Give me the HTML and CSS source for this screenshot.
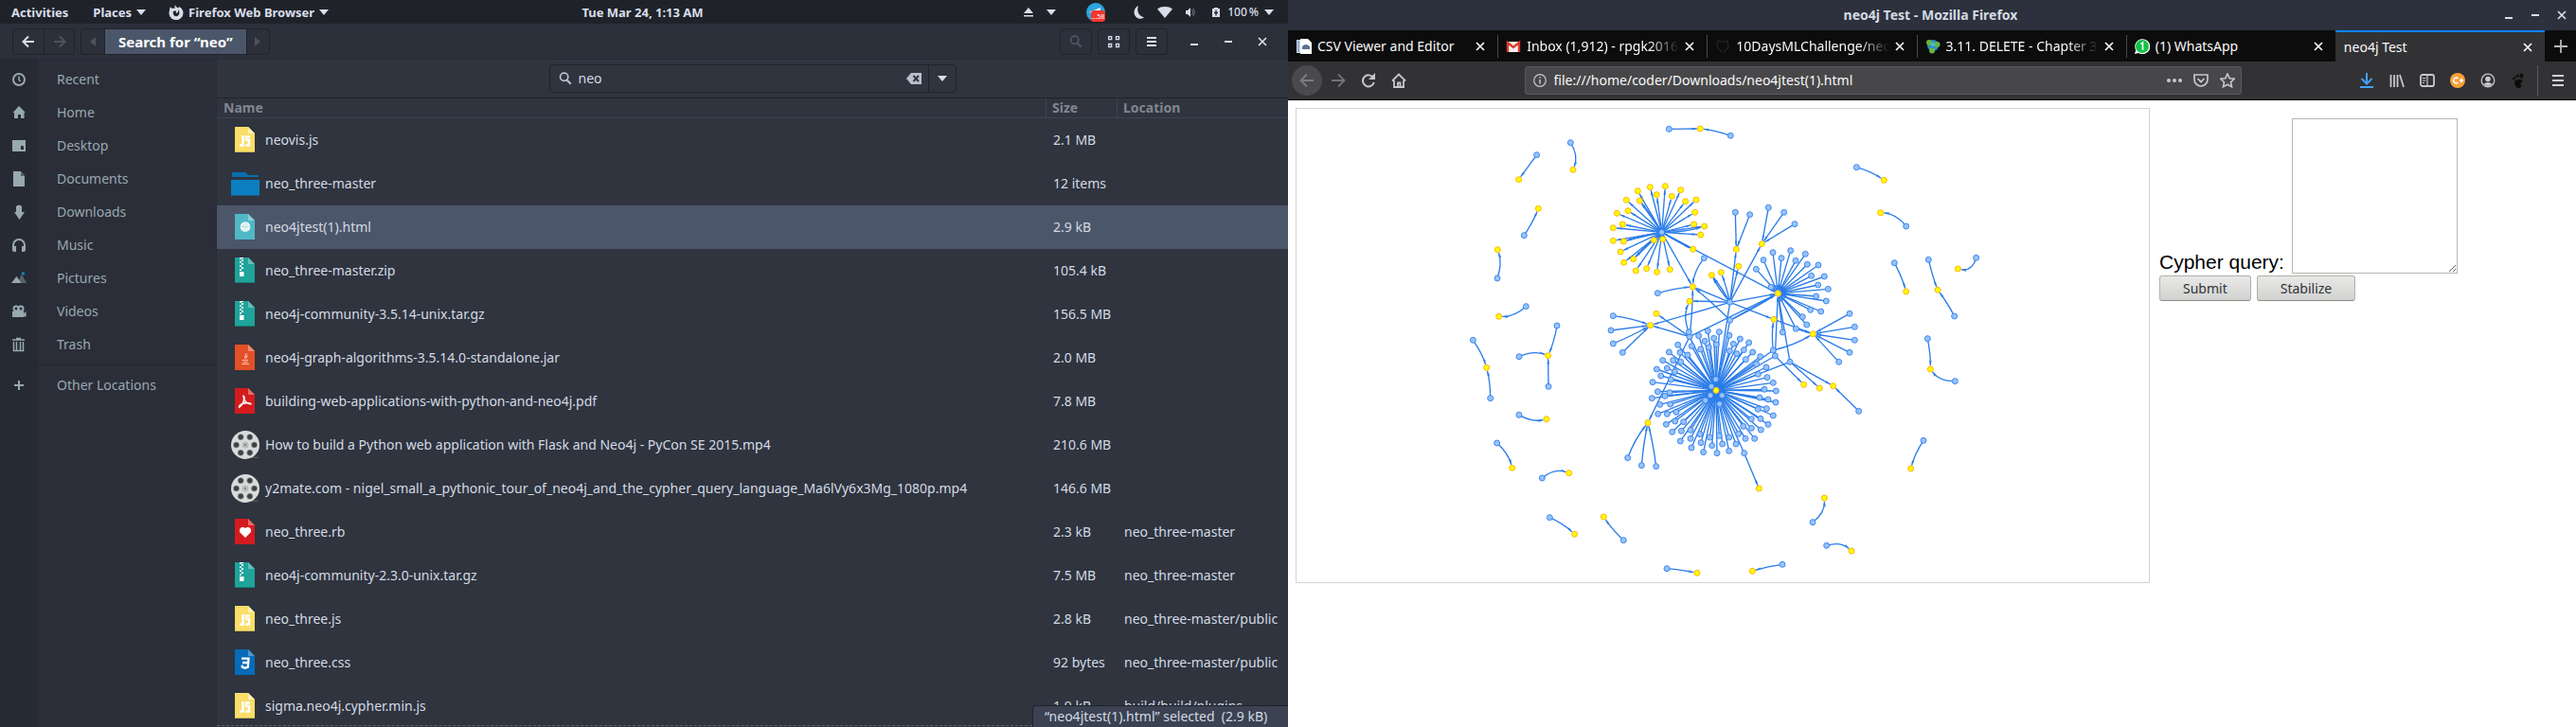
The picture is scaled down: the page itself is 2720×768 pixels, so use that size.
FILE: index.html
```html
<!DOCTYPE html>
<html lang="en">
<head>
<meta charset="utf-8">
<title>neo4j Test</title>
<link rel="stylesheet" href="styles.css">
</head>
<body>
<svg class="sprite" aria-hidden="true">
  <symbol id="caret" viewBox="0 0 10 6"><path d="M0 0h10L5 6z" fill="currentColor"/></symbol>
  <symbol id="close" viewBox="0 0 10 10"><path d="M1 1l8 8M9 1l-8 8" stroke="currentColor" stroke-width="1.7" fill="none"/></symbol>
  <symbol id="search" viewBox="0 0 16 16"><circle cx="6.5" cy="6" r="4.7" fill="none" stroke="currentColor" stroke-width="2"/><path d="M9.5 9.5l5 5" stroke="currentColor" stroke-width="2.4"/></symbol>
  <symbol id="f-js" viewBox="0 0 32 32"><path d="M5 2h14l7 7v20H5z" fill="#f9de68"/><path d="M19 2l7 7h-7z" fill="#fdf0b4"/><path d="M5 28h21v1H5z" fill="#c9b45a"/><path d="M13.5 11v10.500H10M21 12.500h-4V16h3v5.500h-4" fill="none" stroke="#fff" stroke-width="2.500"/></symbol>
  <symbol id="f-dir" viewBox="0 0 32 32"><path d="M2 4h14l3 3h11v2H2z" fill="#0a6fae"/><path d="M1 12h30v16.500H1z" fill="#0c7fc0"/></symbol>
  <symbol id="f-html" viewBox="0 0 32 32"><path d="M5 2h14l7 7v20H5z" fill="#50b8c5"/><path d="M19 2l7 7h-7z" fill="#8fced6"/><circle cx="16" cy="15.500" r="5.300" fill="#fff"/><path d="M14 11.500v8M16 10.500v10M18 11.500v8M11 15.500h10" stroke="#9fd6de" stroke-width=".7"/></symbol>
  <symbol id="f-zip" viewBox="0 0 32 32"><path d="M5 2h14l7 7v20H5z" fill="#1fa39a"/><path d="M19 2l7 7h-7z" fill="#63bfb8"/><path d="M5 28h21v1H5z" fill="#167b74"/><path d="M10 2h2v2h-2zM12 4h2v2h-2zM10 6h2v2h-2zM12 8h2v2h-2zM10 10h2v2h-2zM12 12h2v2h-2zM12 2h2v1h-2zM10 14h2v2h-2zM10 17h4.500v5H10z" fill="#fff"/></symbol>
  <symbol id="f-jar" viewBox="0 0 32 32"><path d="M5 2h14l7 7v20H5z" fill="#e34f26"/><path d="M19 2l7 7h-7z" fill="#ee8d73"/><path d="M17 11c1 2-3 3-1 6M18.500 13.500c-2 1-1 2-1.500 3M12.500 18.500h6.500M13.500 20.500h5M12 22.500h8" fill="none" stroke="#f9c4b4" stroke-width="1.100"/></symbol>
  <symbol id="f-pdf" viewBox="0 0 32 32"><path d="M5 2h14l7 7v20H5z" fill="#d41c1e"/><path d="M19 2l7 7h-7z" fill="#e86a6b"/><path d="M14 9.500c0 5 3 9 8.500 9.500M15 11c0 4-2 9-6 11.500M9.500 21c3-3 8-4 12.500-2.500" fill="none" stroke="#fff" stroke-width="1.700"/></symbol>
  <symbol id="f-rb" viewBox="0 0 32 32"><path d="M5 2h14l7 7v20H5z" fill="#d41c1e"/><path d="M19 2l7 7h-7z" fill="#e86a6b"/><path d="M16 22l-6-6v-3l2-2h2.500L16 12l1.500-1H20l2 2v3z" fill="#fff"/></symbol>
  <symbol id="f-css" viewBox="0 0 32 32"><path d="M5 2h14l7 7v20H5z" fill="#066bb8"/><path d="M19 2l7 7h-7z" fill="#4f98d0"/><path d="M12 11.700h7.500l-.7 9-3 1-3-1-.2-2M13 16h6" fill="none" stroke="#fff" stroke-width="2.300"/></symbol>
  <symbol id="f-reel" viewBox="0 0 32 32"><path d="M22 29l8 .5" stroke="#555" stroke-width="1.500"/><circle cx="16" cy="16" r="15" fill="#dadada"/><circle cx="16" cy="16" r="3.500" fill="#b8bcbc"/><circle cx="16" cy="16" r="1" fill="#777"/><g fill="#3c4145" stroke="#8d9292" stroke-width=".6"><circle cx="11.200" cy="7.700" r="3"/><circle cx="20.800" cy="7.700" r="3"/><circle cx="6.500" cy="16" r="3"/><circle cx="25.500" cy="16" r="3"/><circle cx="11.200" cy="24.300" r="3"/><circle cx="20.800" cy="24.300" r="3"/></g></symbol>
</svg>

<div class="desktop">
  <section class="screen">
    <header class="topbar">
      <nav class="top-left">
        <button>Activities</button>
        <button class="places">Places <svg class="caret"><use href="#caret"/></svg></button>
        <button><svg class="i16" viewBox="0 0 16 16"><path d="M7 0c0 2 2 2.500 3 3.500 1-.3 1-1.500 1-1.500 3 1.500 4.500 4 4.500 6.500A7.500 7.500 0 1 1 1 6l.5-3.500L4 4l3-.5C6 2.500 6.500 1 7 0zM7.500 6L5 7c-1 4 2 6 4 5 3-1 3-5 1-6.500V8L8 9z" fill="currentColor"/></svg> Firefox Web Browser <svg class="caret"><use href="#caret"/></svg></button>
      </nav>
      <button class="clock">Tue Mar 24, 1:13 AM</button>
      <div class="tray">
        <svg class="i10" viewBox="0 0 10 10"><path d="M5 0l5 6H0zM0 8h10v1.500H0z" fill="currentColor"/></svg>
        <svg class="caret"><use href="#caret"/></svg>
        <svg class="i20 telegram" viewBox="0 0 20 20"><circle cx="10" cy="10" r="10" fill="#2ca5e0"/><path d="M3 10l12-5-1 6H8z" fill="#fff"/><rect x="5" y="8" width="15" height="12" rx="3" fill="#f5352f"/><text x="12.500" y="17" text-anchor="middle" class="badge">...58</text></svg>
        <svg class="moon" viewBox="0 0 11 14"><path d="M5 0C-1 3-1 11 5 13.500c2 .7 4 .3 6-1C5 11 3 5 5 0z" fill="currentColor"/></svg>
        <svg class="wifi" viewBox="0 0 16 12"><path d="M0 2.500C4-.8 12-.8 16 2.500L8 12z" fill="currentColor"/></svg>
        <svg class="i10" viewBox="0 0 10 10"><path d="M0 3h2l3-3v10L2 7H0z" fill="currentColor"/><path d="M6.500 2q2 3 0 6M8 1q3 4 0 8" fill="none" stroke="#6b7079"/></svg>
        <svg class="battery" viewBox="0 0 8 10"><path d="M0 1h2V0h4v1h2v9H0z" fill="currentColor"/><path d="M4 2.500v6M2 5.500h4" stroke="#1f2329" stroke-width="1.300"/></svg>
        <span>100&#8201;%</span>
        <svg class="caret"><use href="#caret"/></svg>
      </div>
    </header>

    <div class="headerbar">
      <div class="group">
        <button class="b33" aria-label="Back"><svg class="i14" viewBox="0 0 14 14"><path d="M13 7H2M7 1.500L1.500 7 7 12.500" fill="none" stroke="#d8dee9" stroke-width="2"/></svg></button>
        <button class="b33" aria-label="Forward"><svg class="i14" viewBox="0 0 14 14"><path d="M1 7h11M7 1.500L12.500 7 7 12.500" fill="none" stroke="#4d525d" stroke-width="2"/></svg></button>
      </div>
      <div class="group">
        <button class="b24" aria-label="Previous folder"><svg class="tri" viewBox="0 0 6 10"><path d="M6 0v10L0 5z" fill="#4d525d"/></svg></button>
        <button class="crumb">Search for “neo”</button>
        <button class="b24" aria-label="Next folder"><svg class="tri" viewBox="0 0 6 10"><path d="M0 0v10l6-5z" fill="#4d525d"/></svg></button>
      </div>
      <div class="tools">
        <button class="tool dim" aria-label="Search"><svg class="i14"><use href="#search"/></svg></button>
        <button class="tool" aria-label="Grid view"><svg class="i14" viewBox="0 0 14 14"><path d="M1.700 1.700h3v3h-3zM9.500 1.700h3v3h-3zM1.700 9.500h3v3h-3zM9.500 9.500h3v3h-3z" fill="none" stroke="currentColor" stroke-width="1.300"/></svg></button>
        <button class="tool" aria-label="Menu"><svg class="i14" viewBox="0 0 14 14"><path d="M2 3h10M2 7h10M2 11h10" stroke="currentColor" stroke-width="2"/></svg></button>
      </div>
      <div class="winctl">
        <button aria-label="Minimize"><svg class="i10" viewBox="0 0 10 10"><path d="M1 8h8" stroke="currentColor" stroke-width="2"/></svg></button>
        <button aria-label="Maximize"><svg class="i10" viewBox="0 0 10 10"><path d="M1 5h8" stroke="currentColor" stroke-width="2"/></svg></button>
        <button aria-label="Close"><svg class="i10"><use href="#close"/></svg></button>
      </div>
    </div>

    <div class="files">
      <nav class="places-list">
        <a href="#"><svg viewBox="0 0 16 16"><circle cx="8" cy="8" r="6" fill="none" stroke="currentColor" stroke-width="2"/><path d="M8 4.500V8l1.500 2" fill="none" stroke="currentColor" stroke-width="1.500"/></svg><span>Recent</span></a>
        <a href="#"><svg viewBox="0 0 16 16"><path d="M8 1l7 7h-1.500v6H10v-4H7v4H3V8H1.500z" fill="currentColor"/></svg><span>Home</span></a>
        <a href="#"><svg viewBox="0 0 16 16"><path d="M1 2h14v12H1zM10 8v4h3V9l-1-1z" fill="currentColor" fill-rule="evenodd"/></svg><span>Desktop</span></a>
        <a href="#"><svg viewBox="0 0 16 16"><path d="M2 0h8l4 5v11H2z" fill="currentColor"/><path d="M10 0l4 5h-4z" fill="#59636b"/></svg><span>Documents</span></a>
        <a href="#"><svg viewBox="0 0 16 16"><path d="M5 2q3-3 6 0v6h3l-5.500 8L3 8h2z" fill="currentColor"/></svg><span>Downloads</span></a>
        <a href="#"><svg viewBox="0 0 16 16"><path d="M2 13V8a6 6 0 0 1 12 0v5" fill="none" stroke="currentColor" stroke-width="2"/><path d="M1 9h4v6H3q-2 0-2-2zM11 9h4v4q0 2-2 2h-2z" fill="currentColor"/></svg><span>Music</span></a>
        <a href="#"><svg viewBox="0 0 16 16"><path d="M6 13l5-9 5 9z" fill="#59636b"/><path d="M0 13l5.500-7 5 7z" fill="currentColor"/><circle cx="12.500" cy="3" r="1.700" fill="#1681c4"/></svg><span>Pictures</span></a>
        <a href="#"><svg viewBox="0 0 16 16"><path d="M1 8h12v2l2.500-2v6L13 13v1H1z" fill="currentColor"/><circle cx="5" cy="5" r="2.500" fill="none" stroke="currentColor" stroke-width="2"/><circle cx="10" cy="5" r="2.500" fill="none" stroke="currentColor" stroke-width="2"/></svg><span>Videos</span></a>
        <a href="#"><svg viewBox="0 0 16 16"><path d="M1 3h13M5 1.500h5M2.500 5v9.500h10V5M5.500 5v9M9.500 5v9" fill="none" stroke="currentColor" stroke-width="1.500"/></svg><span>Trash</span></a>
        <a href="#" class="other"><svg viewBox="0 0 16 16"><path d="M8 3v10M3 8h10" stroke="currentColor" stroke-width="2"/></svg><span>Other Locations</span></a>
      </nav>

      <main class="listing">
        <div class="searchrow">
          <div class="entry">
            <svg class="i14"><use href="#search"/></svg>
            <input type="text" value="neo" aria-label="Search files">
            <button class="clear" aria-label="Clear"><svg viewBox="0 0 16 12"><path d="M5 0h11v12H5L0 6z" fill="currentColor"/><path d="M7.500 3l5.500 6M13 3L7.500 9" stroke="#2f343f" stroke-width="2"/></svg></button>
            <button class="drop" aria-label="Filters"><svg class="caret"><use href="#caret"/></svg></button>
          </div>
        </div>
        <div class="scroll">
          <table>
            <thead><tr><th>Name</th><th class="c-size">Size</th><th class="c-loc">Location</th></tr></thead>
            <tbody>
              <tr><td><div class="name"><svg><use href="#f-js"/></svg>neovis.js</div></td><td>2.1 MB</td><td></td></tr>
              <tr><td><div class="name"><svg><use href="#f-dir"/></svg>neo_three-master</div></td><td>12 items</td><td></td></tr>
              <tr class="selected"><td><div class="name"><svg><use href="#f-html"/></svg>neo4jtest(1).html</div></td><td>2.9 kB</td><td></td></tr>
              <tr><td><div class="name"><svg><use href="#f-zip"/></svg>neo_three-master.zip</div></td><td>105.4 kB</td><td></td></tr>
              <tr><td><div class="name"><svg><use href="#f-zip"/></svg>neo4j-community-3.5.14-unix.tar.gz</div></td><td>156.5 MB</td><td></td></tr>
              <tr><td><div class="name"><svg><use href="#f-jar"/></svg>neo4j-graph-algorithms-3.5.14.0-standalone.jar</div></td><td>2.0 MB</td><td></td></tr>
              <tr><td><div class="name"><svg><use href="#f-pdf"/></svg>building-web-applications-with-python-and-neo4j.pdf</div></td><td>7.8 MB</td><td></td></tr>
              <tr><td><div class="name"><svg><use href="#f-reel"/></svg>How to build a Python web application with Flask and Neo4j - PyCon SE 2015.mp4</div></td><td>210.6 MB</td><td></td></tr>
              <tr><td><div class="name"><svg><use href="#f-reel"/></svg>y2mate.com - nigel_small_a_pythonic_tour_of_neo4j_and_the_cypher_query_language_Ma6lVy6x3Mg_1080p.mp4</div></td><td>146.6 MB</td><td></td></tr>
              <tr><td><div class="name"><svg><use href="#f-rb"/></svg>neo_three.rb</div></td><td>2.3 kB</td><td>neo_three-master</td></tr>
              <tr><td><div class="name"><svg><use href="#f-zip"/></svg>neo4j-community-2.3.0-unix.tar.gz</div></td><td>7.5 MB</td><td>neo_three-master</td></tr>
              <tr><td><div class="name"><svg><use href="#f-js"/></svg>neo_three.js</div></td><td>2.8 kB</td><td>neo_three-master/public</td></tr>
              <tr><td><div class="name"><svg><use href="#f-css"/></svg>neo_three.css</div></td><td>92 bytes</td><td>neo_three-master/public</td></tr>
              <tr><td><div class="name"><svg><use href="#f-js"/></svg>sigma.neo4j.cypher.min.js</div></td><td>1.9 kB</td><td>build/build/plugins</td></tr>
            </tbody>
          </table>
          <div class="status">“neo4jtest(1).html” selected&nbsp; (2.9 kB)</div>
        </div>
      </main>
    </div>
  </section>

  <section class="browser">
    <header class="titlebar">
      <h1>neo4j Test - Mozilla Firefox</h1>
      <div class="winctl small">
        <button aria-label="Minimize"><svg class="i10" viewBox="0 0 10 10"><path d="M1 8h8" stroke="currentColor" stroke-width="2"/></svg></button>
        <button aria-label="Maximize"><svg class="i10" viewBox="0 0 10 10"><path d="M1 5h8" stroke="currentColor" stroke-width="2"/></svg></button>
        <button aria-label="Close"><svg class="i10"><use href="#close"/></svg></button>
      </div>
    </header>
    <div class="tabs">
      <div class="tab"><svg class="i16" viewBox="0 0 16 16"><path d="M0 1h7v14H0z" fill="#c9d6ea"/><path d="M4 0h8l4 4v12H4z" fill="#fff"/><path d="M6 8q4-4 8 0v3H6z" fill="#5c7291"/><path d="M2 2v12" stroke="#5c7fb5"/></svg><span class="label">CSV Viewer and Editor</span><button aria-label="Close tab"><svg class="i10"><use href="#close"/></svg></button></div>
      <div class="tab"><svg class="i16" viewBox="0 0 16 16"><path d="M1 3h14v11H1z" fill="#f2f2f2"/><path d="M2 14V4l6 5 6-5v10" fill="none" stroke="#d93a2b" stroke-width="2.400"/></svg><span class="label fade">Inbox (1,912) - rpgk2016@gmail.com</span><button aria-label="Close tab"><svg class="i10"><use href="#close"/></svg></button></div>
      <div class="tab"><svg class="i16" viewBox="0 0 16 16"><path d="M6 15v-3q-4-1-4-5 0-2 1-3V2l2.500 1h5L13 2v2q1 1 1 3 0 4-4 5v3" fill="none" stroke="#1f1f21" stroke-width="1.600"/></svg><span class="label fade">10DaysMLChallenge/neo4j</span><button aria-label="Close tab"><svg class="i10"><use href="#close"/></svg></button></div>
      <div class="tab"><svg class="i16" viewBox="0 0 16 16"><circle cx="8" cy="7" r="6" fill="#2a90c8"/><circle cx="4" cy="4" r="3" fill="#6ab43f"/><circle cx="12.500" cy="6" r="3" fill="#6ab43f"/><circle cx="7" cy="12.500" r="3" fill="#6ab43f"/><circle cx="8" cy="6" r="2" fill="#47c3dc"/></svg><span class="label fade">3.11. DELETE - Chapter 3. Cypher</span><button aria-label="Close tab"><svg class="i10"><use href="#close"/></svg></button></div>
      <div class="tab"><svg class="i16" viewBox="0 0 16 16"><path d="M0 16l1.200-4A8 8 0 1 1 4 15z" fill="#fff"/><circle cx="8" cy="8" r="7" fill="#12c245"/><path d="M6.500 5.500L8.500 4v8" fill="none" stroke="#fff" stroke-width="1.600"/></svg><span class="label">(1) WhatsApp</span><button aria-label="Close tab"><svg class="i10"><use href="#close"/></svg></button></div>
      <div class="tab active"><span class="label">neo4j Test</span><button aria-label="Close tab"><svg class="i10"><use href="#close"/></svg></button></div>
      <button class="newtab" aria-label="New tab"><svg class="i14" viewBox="0 0 14 14"><path d="M7 0v14M0 7h14" stroke="#b8b8bb" stroke-width="1.800"/></svg></button>
    </div>
    <div class="navbar">
      <button class="back" aria-label="Back"><svg class="i16" viewBox="0 0 16 16"><path d="M15 8H2M8 1.500L1.500 8 8 14.500" fill="none" stroke="#7d7d80" stroke-width="1.800"/></svg></button>
      <button aria-label="Forward"><svg class="i16" viewBox="0 0 16 16"><path d="M1 8h13M8 1.500L14.500 8 8 14.500" fill="none" stroke="#737376" stroke-width="1.800"/></svg></button>
      <button aria-label="Reload"><svg class="i16" viewBox="0 0 16 16"><path d="M13 5a6 6 0 1 0 .8 5" fill="none" stroke="currentColor" stroke-width="2"/><path d="M15 0v7H8z" fill="currentColor"/></svg></button>
      <button aria-label="Home"><svg class="i16" viewBox="0 0 16 16"><path d="M1 8.500L8 1.500l7 7M3 8v7h10V8M7 15v-4.500h2.500V15" fill="none" stroke="currentColor" stroke-width="1.800"/></svg></button>
      <div class="urlbar">
        <svg class="i14" viewBox="0 0 14 14"><circle cx="7" cy="7" r="6.300" fill="none" stroke="currentColor" stroke-width="1.200"/><path d="M7 6v4.500M7 3.200v1.500" stroke="currentColor" stroke-width="1.500"/></svg>
        <input type="text" value="file:///home/coder/Downloads/neo4jtest(1).html" aria-label="Address">
        <button aria-label="Page actions"><svg class="i16" viewBox="0 0 16 16"><g fill="currentColor"><circle cx="2" cy="8" r="2"/><circle cx="8" cy="8" r="2"/><circle cx="14" cy="8" r="2"/></g></svg></button>
        <button aria-label="Save to Pocket"><svg class="i16" viewBox="0 0 16 16"><path d="M1 2h14v5a7 7 0 0 1-14 0zM4.500 6L8 9.500 11.500 6" fill="none" stroke="currentColor" stroke-width="1.700"/></svg></button>
        <button aria-label="Bookmark"><svg class="i16" viewBox="0 0 16 16"><path d="M8 1l2.200 4.700 5 .6-3.700 3.400 1 5L8 12.200l-4.500 2.500 1-5L.8 6.300l5-.6z" fill="none" stroke="currentColor" stroke-width="1.600"/></svg></button>
      </div>
      <div class="actions">
        <button aria-label="Downloads"><svg class="i16" viewBox="0 0 16 16"><path d="M8 0v11M2.500 6L8 11.500 13.500 6M1 15h14" fill="none" stroke="#45a1ff" stroke-width="2"/></svg></button>
        <button aria-label="Library"><svg class="i16" viewBox="0 0 16 16"><path d="M1.500 2v13M5 2v13M8.500 2v13M11 2l4 13" stroke="currentColor" stroke-width="1.800"/></svg></button>
        <button aria-label="Sidebar"><svg class="i16" viewBox="0 0 16 16"><rect x="1" y="2" width="14" height="12" rx="2" fill="none" stroke="currentColor" stroke-width="1.800"/><path d="M8 2v12M3 5.500h3.500M3 8h3.500M3 10.500h2" stroke="currentColor" stroke-width="1.200"/></svg></button>
        <button aria-label="Extension"><svg class="i16" viewBox="0 0 16 16"><circle cx="8" cy="8" r="8" fill="#f7a13c"/><path d="M8.500 6a2.800 2.800 0 1 0 0 4M10 8h4M12 6v4" fill="none" stroke="#fff" stroke-width="1.600"/></svg></button>
        <button aria-label="Account"><svg class="i16" viewBox="0 0 16 16"><circle cx="8" cy="8" r="6.800" fill="none" stroke="currentColor" stroke-width="1.300"/><circle cx="8" cy="6.500" r="2.800" fill="currentColor"/><path d="M3.500 11.500q4.500-3 9 0-2 2.500-4.500 2.500t-4.500-2.500z" fill="currentColor"/></svg></button>
        <button aria-label="GNOME integration"><svg class="i16" viewBox="0 0 16 16"><g fill="#0c0c0d"><ellipse cx="11.500" cy="3" rx="2" ry="2.700"/><ellipse cx="7.500" cy="3.200" rx="1.200" ry="1.700"/><ellipse cx="5" cy="4.500" rx="1" ry="1.400"/><ellipse cx="3" cy="6.300" rx="1" ry="1.200"/><path d="M4 9c2-3 9-3 8.500 0-.5 2-3 1.500-2.500 3 2-.5 2 4-1.500 4S4 12 4 9z"/></g></svg></button>
      </div>
      <button class="menu" aria-label="Open menu"><svg class="i14" viewBox="0 0 14 14"><path d="M1 2h12M1 7h12M1 12h12" stroke="#d0d0d3" stroke-width="1.800"/></svg></button>
    </div>
    <div class="page">
      <div class="viz">
        <svg id="graph" viewBox="0 0 2700 1500" role="img" aria-label="Graph of neo4j nodes">
          <defs><marker id="arrow" viewBox="0 0 18 8" refX="17" refY="4" markerWidth="18" markerHeight="8" markerUnits="userSpaceOnUse" orient="auto"><path d="M0 0l18 4-18 4 3-4z" fill="#2b7ce9"/></marker></defs>
        </svg>
      </div>
      <form class="query">
        <div class="field"><label for="cypher">Cypher query:</label><textarea id="cypher"></textarea></div>
        <div class="buttons"><button type="button">Submit</button><button type="button">Stabilize</button></div>
      </form>
    </div>
  </section>
</div>
<script src="graph.js"></script>
</body>
</html>
```
FILE: styles.css
```css
* { box-sizing: border-box; }

body {
  margin: 0;
  background: #2f343f;
  color: #d3dae3;
  font: 14px/20px "Noto Sans", "Open Sans", sans-serif;
}

button {
  margin: 0;
  padding: 0;
  border: 0;
  background: none;
  color: inherit;
  font: inherit;
  display: inline-flex;
  align-items: center;
  justify-content: center;
}

svg { display: block; flex: none; }
.sprite { position: absolute; width: 0; height: 0; }
.i10 { width: 10px; height: 10px; }
.i14 { width: 14px; height: 14px; }
.i16 { width: 16px; height: 16px; }
.i20 { width: 20px; height: 20px; }
.caret { width: 10px; height: 6px; }

.desktop {
  display: grid;
  grid-template-columns: minmax(0, 1fr) minmax(0, 1fr);
  height: 100vh;
  overflow: hidden;
}

.screen, .browser { display: flex; flex-direction: column; min-height: 0; }

/* Top panel */
.topbar {
  display: grid;
  grid-template-columns: 1fr auto 1fr;
  align-items: center;
  flex: none;
  height: 25px;
  padding: 0 15px 0 12px;
  background: #1f2329;
  color: #d8dee9;
  font-size: 13px;
  font-weight: 700;
}
.top-left { display: flex; gap: 24px; }
.top-left button { gap: 5px; white-space: nowrap; }
.places { margin-left: 2px; }
.tray { display: flex; align-items: center; justify-content: flex-end; gap: 14px; }
.telegram { margin: 0 16px 0 18px; }
.badge { font: 7px "Noto Sans", sans-serif; fill: #fff; }
.moon { width: 11px; height: 14px; }
.wifi { width: 16px; height: 12px; }
.battery { width: 8px; height: 10px; margin-left: 4px; }
.tray span { margin: 0 -8px 0 -6px; font-size: 12px; font-weight: 500; }

/* File manager header */
.headerbar {
  display: flex;
  align-items: center;
  flex: none;
  gap: 6px;
  height: 38px;
  padding: 0 15px 0 13px;
  background: #2c303b;
  border-bottom: 1px solid #282b35;
}
.group {
  display: flex;
  height: 28px;
  border: 1px solid #20232b;
  border-radius: 4px;
  overflow: hidden;
}
.group button + button { border-left: 1px solid #20232b; }
.b33 { width: 32px; }
.b24 { width: 24px; }
.tri { width: 6px; height: 10px; }
.crumb { padding: 0 14px; background: #4c566a; color: #fff; font-size: 15px; font-weight: 700; }
.tools { display: flex; gap: 6px; margin-left: auto; }
.tool { width: 34px; height: 28px; border: 1px solid #20232b; border-radius: 4px; color: #d8dee9; }
.dim { color: #4c566a; }
.winctl { display: flex; gap: 12px; margin-left: 10px; color: #d8dee9; }
.winctl button { width: 24px; height: 24px; }

/* File manager body */
.files { display: flex; flex: 1; min-height: 0; }
.places-list {
  display: flex;
  flex-direction: column;
  flex: none;
  width: 229px;
  padding-top: 3px;
  background: linear-gradient(to right, #262a34 40px, #2b2e39 40px);
  border-right: 1px solid #292c36;
}
.places-list a {
  display: flex;
  align-items: center;
  gap: 32px;
  height: 35px;
  padding-left: 12px;
  color: #98a9b0;
  text-decoration: none;
}
.places-list svg { width: 16px; height: 16px; }
.places-list .other { height: 43px; margin-top: 4px; border-top: 1px solid #242731; }

.listing { display: flex; flex-direction: column; flex: 1; min-width: 0; }
.searchrow {
  display: flex;
  justify-content: center;
  flex: none;
  padding: 5px 0;
  border-bottom: 1px solid #20232b;
}
.entry {
  display: flex;
  align-items: center;
  width: 430px;
  height: 30px;
  padding-left: 9px;
  gap: 7px;
  border: 1px solid #20232b;
  border-radius: 4px;
  color: #b8c0cc;
}
.entry input {
  flex: 1;
  min-width: 0;
  padding: 0;
  border: 0;
  background: none;
  color: #d3dae3;
  font: inherit;
}
.clear svg { width: 16px; height: 12px; }
.drop { align-self: stretch; width: 29px; border-left: 1px solid #20232b; color: #d8dee9; }

.scroll { position: relative; flex: 1; min-height: 0; overflow: hidden; }
.scroll::after {
  content: "";
  position: absolute;
  left: 0;
  right: 270px;
  bottom: 1px;
  border-top: 1px dashed #5d626d;
}
table { width: 100%; border-collapse: separate; border-spacing: 0; table-layout: fixed; }
th {
  height: 21px;
  padding: 0 7px;
  border-bottom: 1px solid #3d4452;
  color: #81868f;
  font-weight: 700;
  line-height: 20px;
  text-align: left;
}
th + th { border-left: 1px solid #3d4452; padding-left: 6px; }
.c-size { width: 75px; }
.c-loc { width: 181px; }
td { height: 46px; padding: 0 0 0 8px; white-space: nowrap; }
td:first-child { padding-left: 14px; }
.name { display: flex; align-items: center; gap: 5px; }
.name svg { width: 32px; height: 32px; }
.selected td { background: #4c566a; }
.status {
  position: absolute;
  right: 0;
  bottom: 0;
  width: 270px;
  height: 23px;
  padding-left: 12px;
  border: 1px solid #20232b;
  border-width: 1px 0 0 1px;
  border-radius: 4px 0 0 0;
  background: #3b4252;
  line-height: 22px;
  white-space: nowrap;
}

/* Browser */
.titlebar {
  display: grid;
  grid-template-columns: 1fr auto 1fr;
  align-items: center;
  flex: none;
  height: 32px;
  padding-right: 3px;
  background: #2d313d;
}
.titlebar h1 { grid-column: 2; margin: 0; font-size: 14px; font-weight: 700; }
.small { justify-self: end; gap: 4px; }
.tabs { display: flex; flex: none; height: 33px; background: #0c0c0d; }
.tab {
  position: relative;
  display: flex;
  align-items: center;
  flex: 1;
  min-width: 0;
  gap: 6px;
  padding: 0 13px 0 9px;
  color: #f9f9fa;
}
.tab + .tab::before {
  content: "";
  position: absolute;
  left: 0;
  top: 5px;
  bottom: 4px;
  border-left: 1px solid #4b4b4d;
}
.tab .label { flex: 1; min-width: 0; overflow: hidden; white-space: nowrap; }
.fade { -webkit-mask-image: linear-gradient(to left, transparent, #000 32px); mask-image: linear-gradient(to left, transparent, #000 32px); }
.tab.active { background: #323234; border-top: 2px solid #0a84ff; }
.tab.active::before { display: none; }
.newtab { width: 33px; }
.navbar {
  display: flex;
  align-items: center;
  flex: none;
  gap: 16px;
  height: 41px;
  padding: 0 12px 0 4px;
  border-bottom: 1px solid #0c0c0d;
  background: #323234;
  color: #c8c8cb;
}
.navbar .back { width: 32px; height: 32px; margin-right: -7px; border-radius: 50%; background: #4a4a4d; }
.urlbar {
  display: flex;
  align-items: center;
  flex: 0 1 757px;
  gap: 12px;
  height: 30px;
  margin-left: auto;
  padding: 0 6px 0 8px;
  border: 1px solid #5a5a5d;
  border-radius: 3px;
  background: #474749;
}
.urlbar input {
  flex: 1;
  min-width: 0;
  margin-left: -4px;
  padding: 0;
  border: 0;
  background: none;
  color: #f9f9fa;
  font: inherit;
}
.actions { display: flex; gap: 16px; margin-left: auto; }
.menu { height: 33px; padding-left: 14px; margin-left: -4px; border-left: 1px solid #5a5a5d; }

/* Page */
.page {
  display: flex;
  align-items: flex-start;
  flex: 1;
  gap: 10px;
  padding: 8px;
  background: #fff;
  color: #000;
  font-family: "Liberation Sans", Arial, sans-serif;
}
.viz { flex: 0 1 902px; border: 1px solid #d3d3d3; }
#graph { width: 100%; height: auto; }
.edge { fill: none; stroke: #2b7ce9; stroke-width: 4; }
.node { fill: #97c2fc; stroke: #2b7ce9; stroke-width: 3; stroke-opacity: .85; }
.node.hub { fill: #ffff00; stroke: #ffa500; }
.query { display: flex; flex-direction: column; gap: 2px; padding-top: 11px; }
.field { display: flex; align-items: flex-end; gap: 8px; font-size: 21px; line-height: 24px; }
.field textarea { width: 175px; height: 164px; border: 1px solid #b6b6b3; background: #fff; resize: both; }
.buttons { display: flex; gap: 6px; }
.buttons button {
  height: 27px;
  padding: 0 24px;
  border: 1px solid #b0b0ab;
  border-bottom-color: #8b8b86;
  border-radius: 3px;
  background: linear-gradient(#e8e8e7, #d2d2d0);
  color: #2e3436;
  font: 14px/20px "Noto Sans", sans-serif;
}
```
FILE: graph.js
```js
// Each cluster has an origin and edges [sourceX, sourceY, targetX, targetY, bend].
const fan = (points, x, y) => points.map(p => [p[0], p[1], x, y]);
const spread = (points, x, y) => points.map(p => [x, y, p[0], p[1]]);

const center = [
  ...spread([[208,125],[247,113],[295,110],[344,122],[268,137],[316,142],[172,154],[214,156],[359,158],[393,153],[142,196],[177,188],[389,193],[130,242],[160,231],[386,231],[419,237],[407,264],[130,283],[163,285],[153,318],[164,352],[194,341],[202,378],[236,371],[269,382],[310,374],[259,281],[287,278],[383,310],[382,429]], 284, 256),
  [284,256,383,310,.03], [284,256,214,156,.04], [284,256,163,285,.04], [284,256,419,237,.08], [284,256,194,341,.04],
  ...fan([[583,373],[606,344],[636,320],[663,338],[692,314],[708,346],[739,325],[745,358],[780,360],[758,394],[799,396],[779,423],[811,436],[773,459],[805,474],[788,507],[755,502],[730,524],[743,549],[709,562],[667,573],[630,430],[500,478],[500,535],[372,587],[643,648],[690,667],[284,256]], 652, 450),
  [500,535,652,450,.03],
  ...fan([[401,584],[430,569],[466,572],[498,583],[449,592],[420,601],[457,612],[433,621],[407,627],[379,617],[335,613],[307,636],[342,637],[366,645],[287,662],[320,662],[344,667],[268,690],[301,687],[325,698],[281,711],[313,723],[255,731],[271,761],[309,764],[294,775],[253,782],[278,802],[311,801],[272,832],[301,832],[330,826],[298,865],[326,855],[353,857],[317,889],[346,886],[375,883],[343,918],[375,910],[405,896],[378,939],[408,923],[436,906],[416,953],[443,932],[466,901],[459,956],[476,927],[497,906],[497,949],[519,927],[527,895],[549,910],[542,871],[578,910],[568,877],[598,882],[568,848],[597,847],[621,865],[637,837],[589,817],[616,815],[645,795],[594,780],[621,786],[646,759],[609,754],[637,733],[589,706],[618,716],[615,684],[584,674],[596,650],[550,659],[572,636],[522,641],[544,629],[499,632],[511,610],[532,594],[560,606],[455,722],[441,745],[438,773],[422,789],[475,773],[467,800],[500,478],[500,535],[637,630],[643,648],[690,667],[545,956],[372,587]], 456, 757),
  ...fan([[879,514],[895,556],[895,598],[879,637],[845,667],[709,562]], 763, 578), [637,630,763,578,.08],
  [500,478,639,532,0], [639,532,763,578,0],
  ...fan([[123,567],[160,637],[500,478],[372,587]], 248, 551), [130,521,248,551,-.06], [130,609,248,551,.03],
  [176,971,240,860,-.08], [220,995,240,860,-.03], [266,998,240,860,.03], [372,587,240,860,0],
  [418,338,382,429,.15], [271,449,382,429,-.05], [500,478,382,429,0], [500,535,382,429,.03], [372,587,382,429,.03],
  [500,478,372,475,.02], [370,572,372,475,-.22], [372,587,267,514,0],
  [517,193,520,310,0], [563,200,520,310,0], [500,478,520,310,0],
  [622,178,601,293,0], [671,193,601,293,0], [705,230,601,293,0], [500,478,601,293,0],
  [500,478,527,364,0], [500,478,472,383,.03], [500,478,442,392,.04], [500,478,442,392,-.06],
  [637,630,639,532,-.07], [643,648,734,739,0], [690,667,784,750,0], [690,667,827,743,0], [908,823,827,743,0],
  [545,956,592,1068,0]
];

const left = [
  [308,161,251,239,0], [415,122,423,208,-.25], [268,416,313,331,.05], [183,552,184,461,.17], [274,641,188,673,-.2],
  [106,748,149,835,-.08], [161,932,149,835,.06], [372,702,344,797,-.06], [252,800,344,797,-.2], [345,895,344,797,0],
  [252,985,339,998,.2], [182,1074,230,1153,-.15], [325,1185,410,1169,-.28], [349,1310,428,1363,-.08],
  [583,1382,520,1308,-.05], [727,79,826,78,0], [922,100,826,78,.06], [720,1472,816,1486,-.03]
];

const right = [
  [481,200,568,241,-.08], [638,387,557,344,.22], [601,503,638,594,-.05], [709,493,738,589,.03], [791,672,738,589,.04],
  [860,487,802,522,-.45], [706,743,715,840,-.05], [793,878,715,840,-.26], [693,1066,653,1155,.08],
  [342,1325,379,1248,.26], [386,1399,465,1416,-.28], [246,1459,151,1480,.04]
];

const NS = "http://www.w3.org/2000/svg";
const svg = document.getElementById("graph");

function add(parent, tag, attrs) {
  const el = document.createElementNS(NS, tag);
  for (const key in attrs) el.setAttribute(key, attrs[key]);
  parent.appendChild(el);
  return el;
}

function drawCluster(edges, ox, oy) {
  const g = add(svg, "g", { transform: `translate(${ox} ${oy})` });
  const nodes = new Map();
  for (const [x1, y1, x2, y2, bend = 0] of edges) {
    const dx = x2 - x1, dy = y2 - y1;
    const cx = (x1 + x2) / 2 - dy * bend, cy = (y1 + y2) / 2 + dx * bend;
    const len = Math.hypot(x2 - cx, y2 - cy);
    const ex = x2 - (x2 - cx) / len * 11, ey = y2 - (y2 - cy) / len * 11;
    add(g, "path", { class: "edge", d: `M${x1} ${y1}Q${cx} ${cy} ${ex} ${ey}`, "marker-end": "url(#arrow)" });
    if (!nodes.has(x1 + "," + y1)) nodes.set(x1 + "," + y1, "node");
    nodes.set(x2 + "," + y2, "node hub");
  }
  for (const [key, cls] of nodes) {
    const [x, y] = key.split(",");
    add(g, "circle", { class: cls, cx: x, cy: y, r: 9 });
  }
}

drawCluster(center, 873, 135);
drawCluster(left, 453, -15);
drawCluster(right, 1293, -15);
```
